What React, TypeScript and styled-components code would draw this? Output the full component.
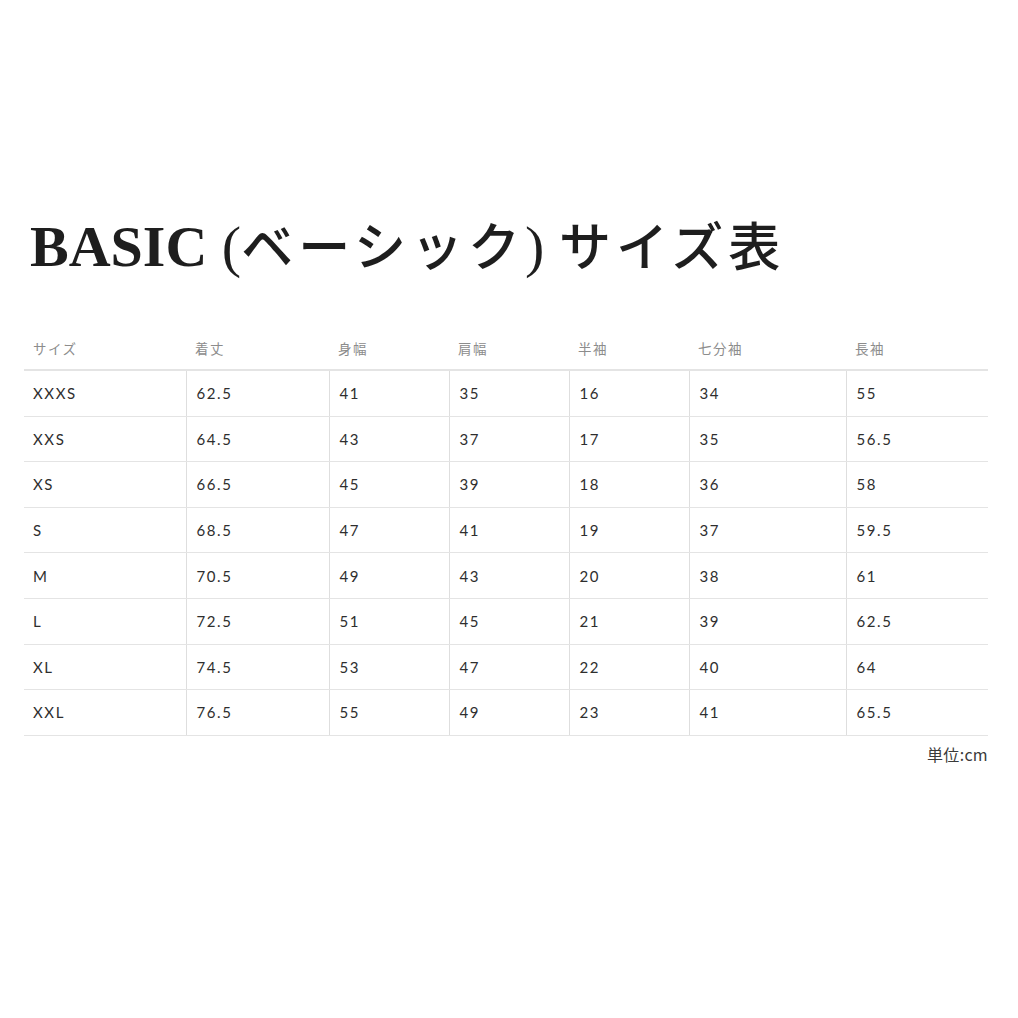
import React from "react";
import styled, { createGlobalStyle } from "styled-components";

const Global = createGlobalStyle`
  html, body { margin: 0; padding: 0; background: #fff; }
  body { font-family: Lato, "Noto Sans CJK JP", sans-serif; color: #333; }
`;

const Page = styled.div`
  width: 1018px;
  height: 1018px;
  box-sizing: border-box;
  padding: 204px 30px 0 24px;
`;

const Title = styled.h1`
  margin: 0 0 0 6px;
  height: 80px;
  font-family: "Liberation Serif", "Noto Sans CJK JP", serif;
  font-weight: 700;
  font-size: 58px;
  line-height: 80px;
  color: #1e1e1e;
  letter-spacing: 0;
  white-space: nowrap;
`;

const Paren = styled.span`
  font-weight: 400;
`;

const Kana = styled.span`
  font-family: "Noto Sans CJK JP", sans-serif;
  font-weight: 500;
  font-size: 52px;
  letter-spacing: 5px;
`;

const Table = styled.table`
  margin-top: 42px;
  width: 964px;
  border-collapse: collapse;
  table-layout: fixed;
`;

const Th = styled.th`
  text-align: left;
  font-weight: 400;
  font-size: 13.5px;
  color: #8c8c8c;
  letter-spacing: 1.5px;
  height: 43px;
  padding: 0 0 0 9px;
  border-bottom: 2px solid #e4e4e4;
  font-family: "Noto Sans CJK JP", sans-serif;
`;

const Td = styled.td<{ $first?: boolean }>`
  height: 44.6px;
  padding: 0 0 0 ${(p) => (p.$first ? 9 : 10)}px;
  font-size: 15px;
  line-height: 18px;
  color: #2e2e2e;
  letter-spacing: 1.6px;
  border-bottom: 1px solid #e4e4e4;
  border-left: ${(p) => (p.$first ? "none" : "1px solid #dedede")};
`;

const Unit = styled.div`
  width: 964px;
  text-align: right;
  margin-top: 6px;
  font-family: "Noto Sans CJK JP", sans-serif;
  font-size: 16px;
  color: #3a3a3a;
  letter-spacing: 0.3px;
`;

const widths = [162, 143, 120, 120, 120, 157, 142];
const headers = ["サイズ", "着丈", "身幅", "肩幅", "半袖", "七分袖", "長袖"];
const rows = [
  ["XXXS", "62.5", "41", "35", "16", "34", "55"],
  ["XXS", "64.5", "43", "37", "17", "35", "56.5"],
  ["XS", "66.5", "45", "39", "18", "36", "58"],
  ["S", "68.5", "47", "41", "19", "37", "59.5"],
  ["M", "70.5", "49", "43", "20", "38", "61"],
  ["L", "72.5", "51", "45", "21", "39", "62.5"],
  ["XL", "74.5", "53", "47", "22", "40", "64"],
  ["XXL", "76.5", "55", "49", "23", "41", "65.5"],
];

export default function App() {
  return (
    <Page>
      <Global />
      <Title>
        BASIC <Paren>(</Paren>
        <Kana>ベーシック</Kana>
        <Paren>)</Paren> <Kana>サイズ表</Kana>
      </Title>
      <Table>
        <colgroup>
          {widths.map((w, i) => (
            <col key={i} style={{ width: w }} />
          ))}
        </colgroup>
        <thead>
          <tr>
            {headers.map((h) => (
              <Th key={h}>{h}</Th>
            ))}
          </tr>
        </thead>
        <tbody>
          {rows.map((r) => (
            <tr key={r[0]}>
              {r.map((c, i) => (
                <Td key={i} $first={i === 0}>
                  {c}
                </Td>
              ))}
            </tr>
          ))}
        </tbody>
      </Table>
      <Unit>単位:cm</Unit>
    </Page>
  );
}
